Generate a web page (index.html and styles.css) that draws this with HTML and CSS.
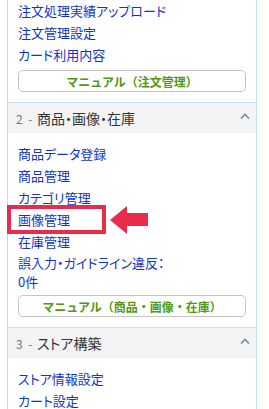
FILE: index.html
```html
<!DOCTYPE html>
<html>
<head>
    <title>Store Menu</title>
    <link rel="stylesheet" href="styles.css">
</head>
<body>
    <div class="side-menu">
        <div class="menu-body">
            <a href="#" class="menu-link">注文処理実績アップロード</a>
            <a href="#" class="menu-link">注文管理設定</a>
            <a href="#" class="menu-link">カード利用内容</a>
            <a href="#" class="manual-button">マニュアル（注文管理）</a>
        </div>

        <div class="menu-head">
            <span class="menu-num">2 -</span>
            <span class="menu-title">商品・画像・在庫</span>
            <svg class="menu-caret" width="10" height="6" viewBox="0 0 10 6">
                <path d="M1 5.5 L5 1.5 L9 5.5" fill="none" stroke="#7d8996" stroke-width="1.6"/>
            </svg>
        </div>
        <div class="menu-body">
            <a href="#" class="menu-link">商品データ登録</a>
            <a href="#" class="menu-link">商品管理</a>
            <a href="#" class="menu-link">カテゴリ管理</a>
            <a href="#" class="menu-link marked">画像管理
                <span class="mark-box"></span>
                <svg class="mark-arrow" width="38" height="29" viewBox="0 0 38 29">
                    <path d="M0 15 L17 1 L17 8 L38 8 L38 21 L17 21 L17 29 Z" fill="#ea2b4b"/>
                </svg>
            </a>
            <a href="#" class="menu-link">在庫管理</a>
            <a href="#" class="menu-link two-line">誤入力・ガイドライン違反：<br>0件</a>
            <a href="#" class="manual-button">マニュアル（商品・画像・在庫）</a>
        </div>

        <div class="menu-head">
            <span class="menu-num">3 -</span>
            <span class="menu-title">ストア構築</span>
            <svg class="menu-caret" width="10" height="6" viewBox="0 0 10 6">
                <path d="M1 5.5 L5 1.5 L9 5.5" fill="none" stroke="#7d8996" stroke-width="1.6"/>
            </svg>
        </div>
        <div class="menu-body">
            <a href="#" class="menu-link">ストア情報設定</a>
            <a href="#" class="menu-link">カート設定</a>
        </div>
    </div>
</body>
</html>
```

FILE: styles.css
```css
body {
    font-family: "Noto Sans CJK JP", "Noto Sans", sans-serif;
    margin: 0;
    padding: 0;
    background-color: #fff;
    color: #333;
    overflow: hidden;
}

.side-menu {
    width: 250px;
    margin-left: 7px;
    box-sizing: border-box;
    border-left: 1px solid #c3e0f0;
    border-right: 1px solid #c3e0f0;
}

.menu-body {
    display: flex;
    flex-direction: column;
    align-items: flex-start;
    padding: 10px 10px 10px 10px;
}

.menu-body:first-child {
    padding-top: 0;
}

.menu-link {
    display: block;
    font-size: 13px;
    line-height: 16px;
    padding: 3px 0;
    color: #1234c8;
    text-decoration: none;
    white-space: nowrap;
    font-feature-settings: "palt";
}

.menu-link.two-line {
    line-height: 19px;
    padding: 0;
}

.manual-button {
    display: flex;
    align-items: center;
    justify-content: center;
    align-self: stretch;
    height: 22px;
    margin-top: 4px;
    box-sizing: border-box;
    border: 1px solid #c4c4c4;
    border-radius: 5px;
    background-color: #fff;
    color: #4f9a10;
    font-size: 12px;
    font-weight: bold;
    text-decoration: none;
}

.menu-head {
    display: flex;
    align-items: center;
    height: 31px;
    box-sizing: border-box;
    border-top: 1px solid #c3e0f0;
    background-color: #f3f3f3;
    padding: 0 6px 0 8px;
}

.menu-num {
    font-size: 12px;
    color: #777;
    width: 21px;
    word-spacing: 3px;
}

.menu-title {
    font-size: 14px;
    color: #333;
    flex: 1;
    font-feature-settings: "palt";
}

.menu-caret {
    margin-bottom: 4px;
}

/* annotation over the 画像管理 link */
.marked {
    position: relative;
}

.mark-box {
    position: absolute;
    left: -11px;
    top: -4px;
    width: 99px;
    height: 29px;
    box-sizing: border-box;
    border: 4px solid #ea2b4b;
}

.mark-arrow {
    position: absolute;
    left: 92px;
    top: -4px;
}
```
